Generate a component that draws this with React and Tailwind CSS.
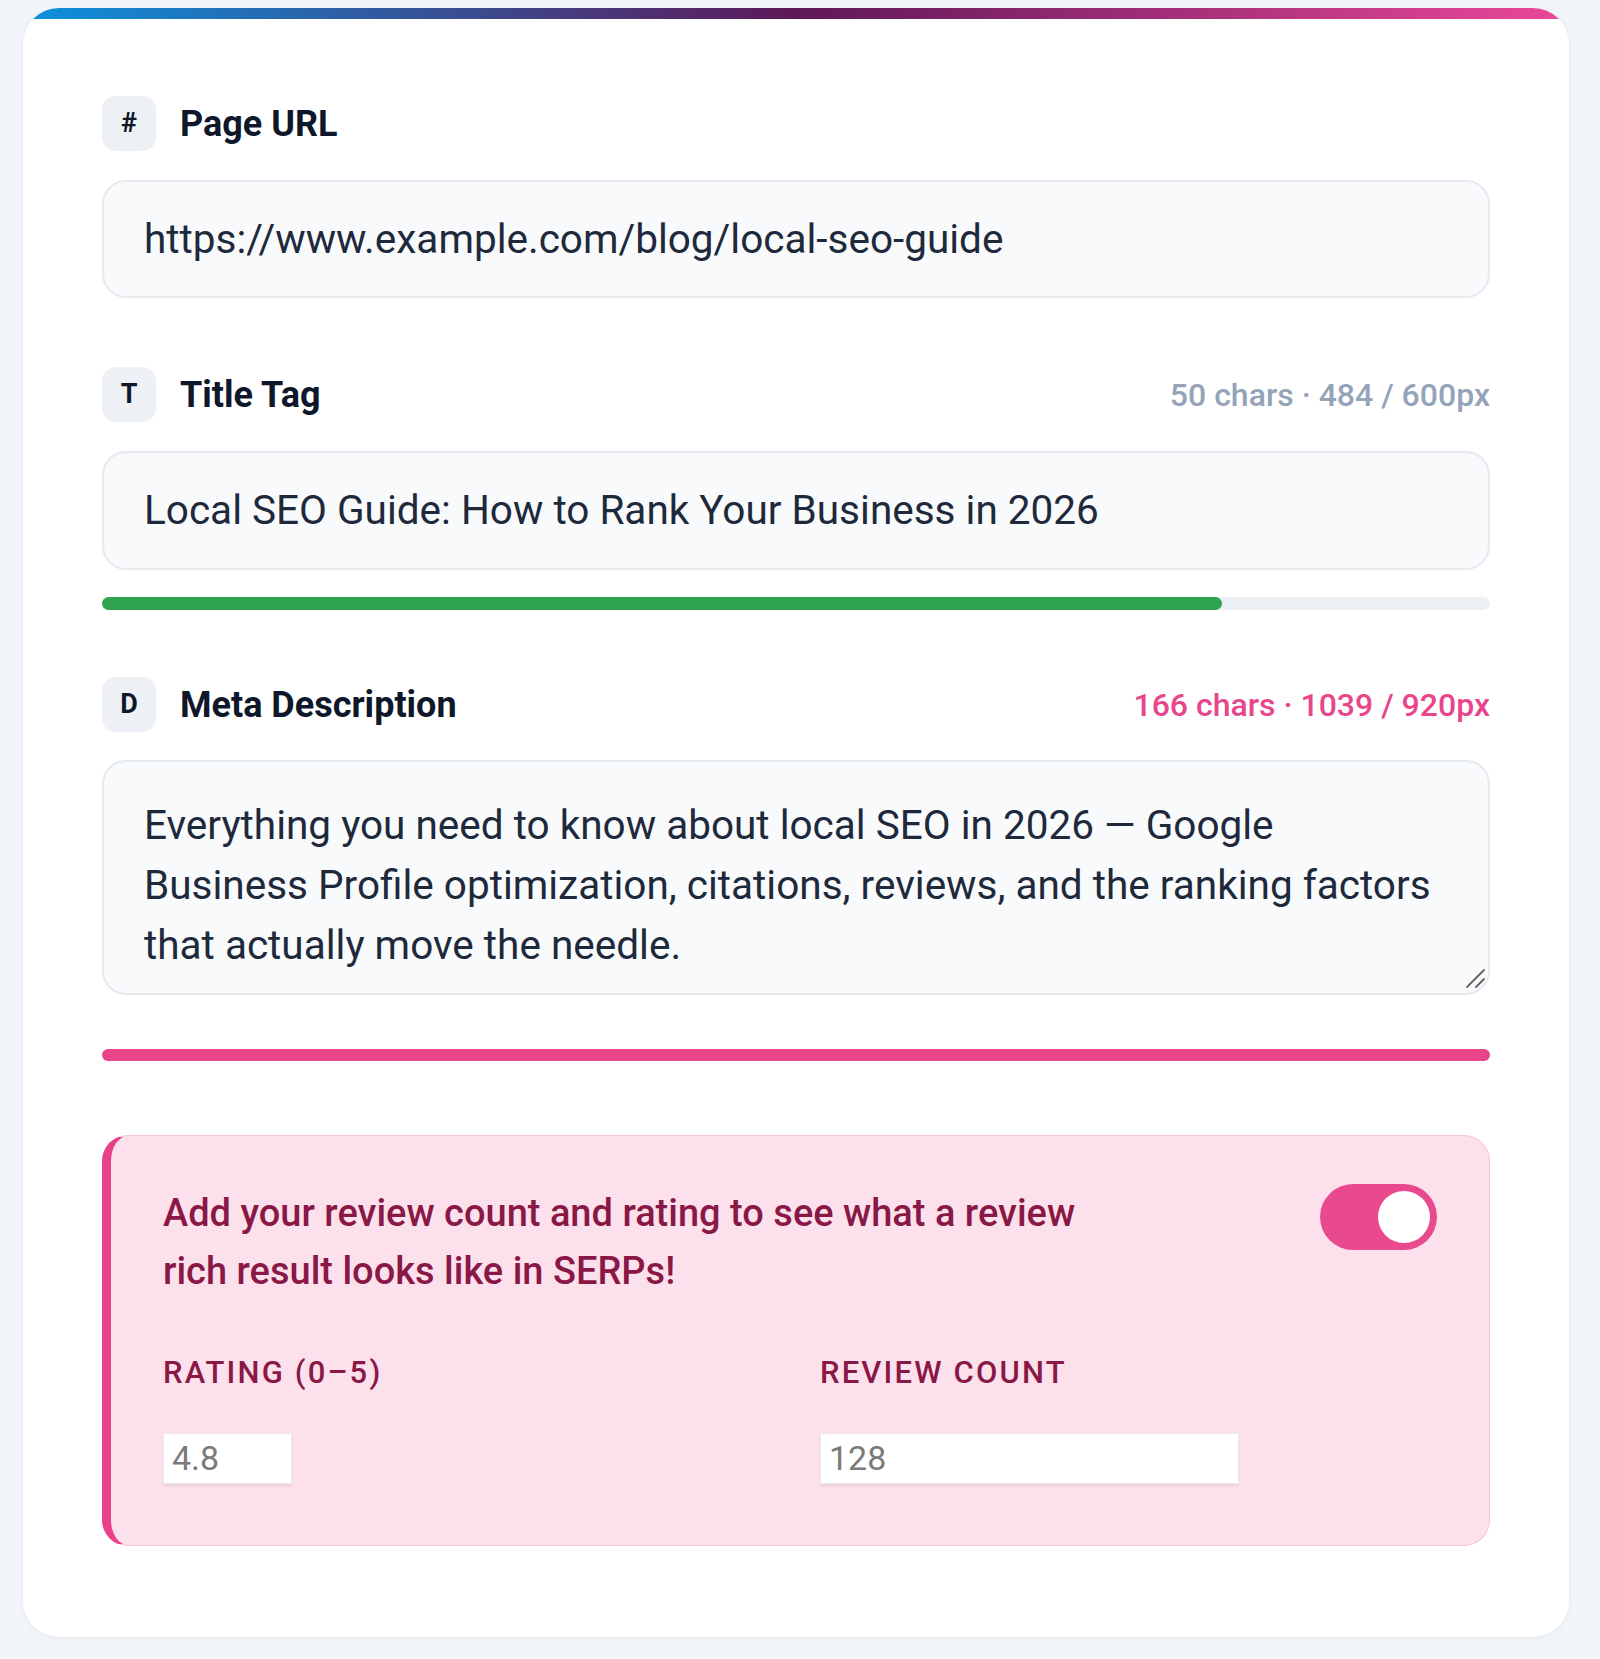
import React from "react";

function Badge({ children }) {
  return (
    <div className="flex h-[55px] w-[54px] shrink-0 items-center justify-center rounded-[14px] bg-[#edf0f5] text-[27px] font-bold text-[#0f172a]">
      {children}
    </div>
  );
}

function FieldHeader({ badge, label, meta, metaClass }) {
  return (
    <div className="flex h-[55px] items-center justify-between">
      <div className="flex items-center">
        <Badge>{badge}</Badge>
        <span className="ml-[24px] text-[36px] font-bold text-[#0f172a]">{label}</span>
      </div>
      {meta && <span className={"text-[32px] font-medium " + metaClass}>{meta}</span>}
    </div>
  );
}

export default function App() {
  return (
    <div className="min-h-screen bg-[#f1f5f9] pb-[24px] pl-[23px] pr-[31px] pt-[8px] font-[Roboto,sans-serif]">
      <div className="overflow-hidden rounded-[36px] bg-white shadow-[0_1px_4px_rgba(15,23,42,0.06)]">
        <div className="h-[11px] bg-linear-to-r/srgb from-[#0b92dc] via-[#5e1858] via-50% to-[#ec4899]" />
        <div className="px-[79px] pb-[91px] pt-[77px]">
          <FieldHeader badge="#" label="Page URL" />
          <div className="mt-[29px] flex h-[118px] items-center rounded-[24px] border-2 border-[#e5e9f0] bg-[#f8fafc] px-[40px] text-[40.5px] text-[#1e293b]">
            https://www.example.com/blog/local-seo-guide
          </div>

          <div className="mt-[69px]">
            <FieldHeader badge="T" label="Title Tag" meta="50 chars · 484 / 600px" metaClass="text-[#94a3b8]" />
          </div>
          <div className="mt-[29px] flex h-[119px] items-center rounded-[24px] border-2 border-[#e5e9f0] bg-[#f8fafc] px-[40px] text-[40.5px] text-[#1e293b]">
            Local SEO Guide: How to Rank Your Business in 2026
          </div>
          <div className="mt-[27px] h-[13px] rounded-full bg-[#eceff3]">
            <div className="h-full w-[80.67%] rounded-full bg-[#2ea44f]" />
          </div>

          <div className="mt-[67px]">
            <FieldHeader badge="D" label="Meta Description" meta="166 chars · 1039 / 920px" metaClass="text-[#e8458b]" />
          </div>
          <div className="relative mt-[28px]">
            <textarea
              readOnly
              className="block h-[235px] w-full resize-none rounded-[24px] border-2 border-[#e5e9f0] bg-[#f8fafc] px-[40px] pt-[33px] text-[40.5px] leading-[60px] text-[#1e293b] outline-none"
              value={"Everything you need to know about local SEO in 2026 — Google\nBusiness Profile optimization, citations, reviews, and the ranking factors\nthat actually move the needle."}
            />
            <svg className="absolute bottom-[6px] right-[4px] h-[22px] w-[22px]" viewBox="0 0 22 22">
              <line x1="3" y1="20" x2="20" y2="3" stroke="#606060" strokeWidth="1.8" strokeLinecap="round" />
              <line x1="12" y1="20" x2="20" y2="12" stroke="#606060" strokeWidth="1.8" strokeLinecap="round" />
            </svg>
          </div>
          <div className="mt-[54px] h-[12px] rounded-full bg-[#e8458b]" />

          <div className="mt-[74px] rounded-[26px] border border-l-[9px] border-[#f7c6da] border-l-[#e8408a] bg-[#fce1ec] pb-[61px] pl-[52px] pr-[52px] pt-[48px]">
            <div className="flex items-start justify-between">
              <p className="text-[38px] font-medium leading-[58px] text-[#8a1846]">
                Add your review count and rating to see what a review
                <br />
                rich result looks like in SERPs!
              </p>
              <div className="flex h-[66px] w-[117px] shrink-0 items-center justify-end rounded-full bg-[#e84a8d] pr-[7px]">
                <div className="h-[52px] w-[52px] rounded-full bg-white" />
              </div>
            </div>
            <div className="mt-[55px] grid grid-cols-2 gap-[40px]">
              <div>
                <div className="text-[31px] font-medium uppercase leading-[36px] tracking-[0.07em] text-[#8a1846]">
                  Rating (0–5)
                </div>
                <input
                  placeholder="4.8"
                  className="mt-[42px] block h-[51px] w-[129px] border border-[#ececec] bg-white pl-[8px] text-[34px] text-[#333] shadow-[0_2px_2px_rgba(0,0,0,0.08)] outline-none placeholder:text-[#7a7a7a]"
                />
              </div>
              <div>
                <div className="text-[31px] font-medium uppercase leading-[36px] tracking-[0.07em] text-[#8a1846]">
                  Review Count
                </div>
                <input
                  placeholder="128"
                  className="mt-[42px] block h-[51px] w-[419px] border border-[#ececec] bg-white pl-[8px] text-[34px] text-[#333] shadow-[0_2px_2px_rgba(0,0,0,0.08)] outline-none placeholder:text-[#7a7a7a]"
                />
              </div>
            </div>
          </div>
        </div>
      </div>
    </div>
  );
}
